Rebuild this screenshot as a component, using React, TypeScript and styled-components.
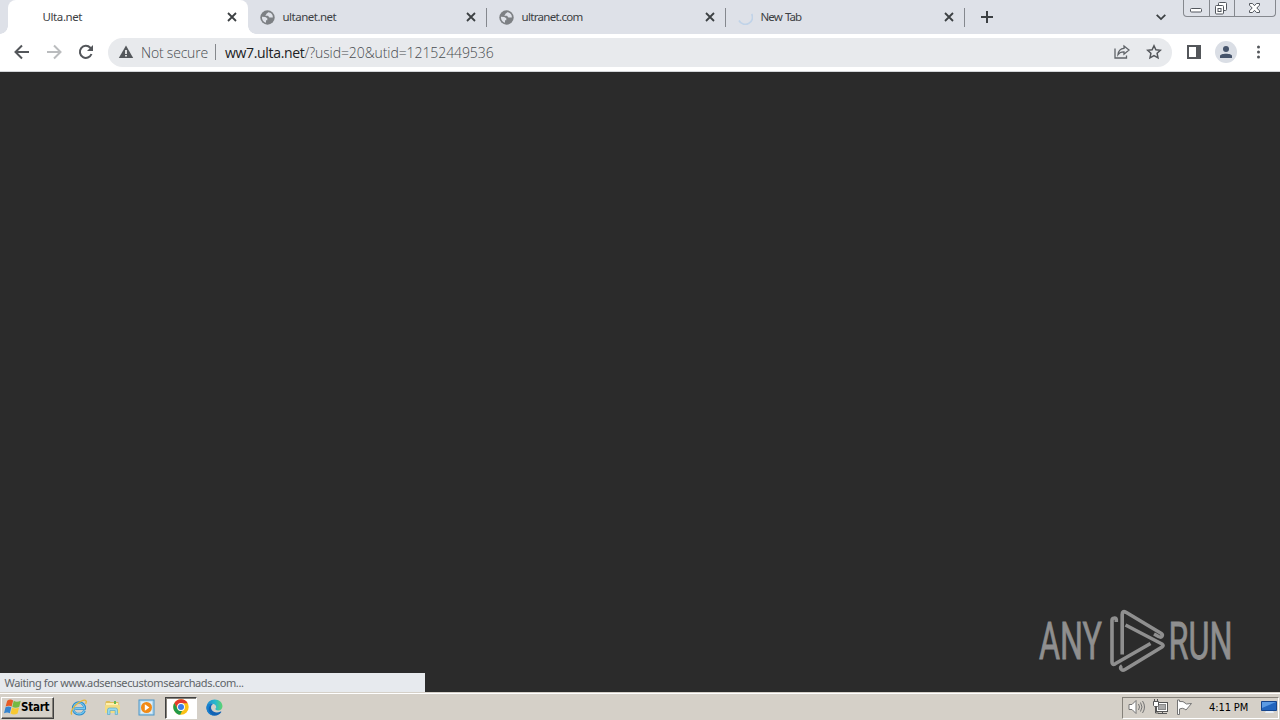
import React from "react"
import styled, { createGlobalStyle, css } from "styled-components"


const GlobalStyle = createGlobalStyle`
  * {
    box-sizing: border-box;
  }

  body {
    margin: 0;
    overflow: hidden;
    font-family: "DejaVu Sans Condensed", "DejaVu Sans", sans-serif;
  }

  svg {
    display: block;
    flex: none;
  }
`

const Desktop = styled.div`
  display: flex;
  flex-direction: column;

  width: 1280px;
  height: 720px;

  overflow: hidden;
`

const TabStrip = styled.div`
  display: flex;
  position: relative;

  height: 34px;
  padding-left: 8px;

  background: #dee1e8;
`

const TabItem = styled.div<{ $active?: boolean }>`
  display: flex;
  align-items: center;
  position: relative;

  width: ${ props => props.$active ? "240px" : "239px" };
  height: 34px;
  padding: 0 11px;

  ${ props => props.$active ? css`
    background: #fff;
    border-radius: 8px 8px 0 0;

    &::before,
    &::after {
      content: "";
      position: absolute;
      bottom: 0;
      width: 8px;
      height: 8px;
    }

    &::before {
      left: -8px;
      background: radial-gradient(circle at 0 0, transparent 7.5px, #fff 8px);
    }

    &::after {
      right: -8px;
      background: radial-gradient(circle at 100% 0, transparent 7.5px, #fff 8px);
    }
  ` : css`
    &::after {
      content: "";
      position: absolute;
      top: 8px;
      right: 0;
      width: 1px;
      height: 19px;
      background: #85888e;
    }
  ` }
`

const Favicon = styled.span`
  display: flex;
  justify-content: center;

  width: 16px;
  margin-right: 7.5px;
`

const TabTitle = styled.span<{ $spacing: number }>`
  flex: 1;

  font-family: "Noto Sans", sans-serif;
  font-size: 11.5px;
  line-height: 34px;
  letter-spacing: ${ props => props.$spacing }px;
  word-spacing: 1px;
  white-space: nowrap;

  color: #3c4043;
`

const CloseSlot = styled.span`
  width: 10px;
`

const NewTab = styled.span`
  padding: 11px 0 0 16px;
`

const TabSearch = styled.span`
  margin-left: auto;
  padding: 14px 17px 0 0;
`

const WindowControls = styled.div`
  display: flex;

  width: 93px;
  height: 17px;
  margin-right: 4px;

  border: 1px solid #85888e;
  border-top: none;
  border-radius: 0 0 4px 4px;
`

const WindowButton = styled.span<{ $width: number }>`
  display: flex;
  justify-content: center;

  width: ${ props => props.$width }px;
  height: 16px;

  & + & {
    border-left: 1px solid #85888e;
  }
`

const Toolbar = styled.div`
  display: flex;
  align-items: center;

  height: 38px;
  padding: 0 13px 1px 14px;

  background: #fff;
  border-bottom: 1px solid #d3d5d8;
`

const NavButtons = styled.div`
  display: flex;
  flex: none;
  gap: 16px;

  width: 94px;
`

const AddressBar = styled.div`
  display: flex;
  flex: none;
  align-items: center;

  width: 1064px;
  height: 29px;
  padding: 0 10px;

  font-family: "Open Sans", "Noto Sans", sans-serif;
  font-size: 14px;
  font-weight: 300;
  white-space: nowrap;

  color: #484c50;
  background: #e8eaed;
  border-radius: 15px;
`

const Security = styled.span`
  width: 67px;
  margin-left: 7px;

  letter-spacing: -0.2px;
`

const Divider = styled.span`
  width: 1px;
  height: 16px;
  margin: 0 9px 0 7px;

  background: #85888c;
`

const Url = styled.span`
  flex: 1;

  letter-spacing: -0.08px;
`

const Host = styled.span`
  font-weight: 400;
  letter-spacing: -0.33px;

  color: #202124;
`

const AddressActions = styled.span`
  display: flex;
  align-items: center;
  gap: 16px;
`

const ToolbarActions = styled.div`
  display: flex;
  align-items: center;

  padding-left: 14px;
`

const Avatar = styled.span`
  display: flex;
  align-items: center;
  justify-content: center;

  width: 22px;
  height: 22px;
  margin: 0 14px 0 13px;

  background: #dadee5;
  border-radius: 50%;
`

const Page = styled.main`
  display: flex;
  justify-content: space-between;
  align-items: flex-end;

  height: 620px;

  background: #2b2b2b;
`

const StatusBubble = styled.div`
  width: 425px;
  height: 19px;
  padding-left: 4.5px;

  font-family: "Noto Sans", sans-serif;
  font-size: 11px;
  line-height: 20px;
  letter-spacing: -0.37px;

  color: #606468;
  background: #e7eaee;
`

const Watermark = styled.div`
  margin: 0 40px 17px 0;
`

const Taskbar = styled.footer`
  display: flex;
  align-items: center;

  height: 28px;
  padding: 2px 0 0 1px;

  background: #d5d0c8;
  border-top: 1px solid #d5d0c8;
  box-shadow: inset 0 1px #fff;
`

const StartButton = styled.div`
  display: flex;
  align-items: center;

  width: 53px;
  height: 22px;
  padding: 0 0 2px 2px;

  font-family: "DejaVu Sans Condensed", "DejaVu Sans", sans-serif;
  font-size: 11.5px;
  font-weight: bold;
  letter-spacing: -0.25px;

  color: #000;
  border: 1px solid;
  border-color: #fff #404040 #404040 #fff;
  box-shadow: inset -1px -1px #85817a;
`

const QuickLaunch = styled.div`
  display: flex;
  align-items: center;

  margin-left: 8px;
`

const LaunchItem = styled.span<{ $pressed?: boolean }>`
  display: flex;
  align-items: center;
  justify-content: center;

  width: 32px;
  height: 22px;
  margin: 0 1px;
  padding: 0 1px 1px 0;

  ${ props => props.$pressed && css`
    background: #fff;
    border: 1px solid;
    border-color: #404040 #fff #fff #404040;
    box-shadow: inset 1px 1px #85817a;
  ` }
`

const Tray = styled.div`
  display: flex;
  align-items: center;

  width: 157px;
  height: 22px;
  margin: 0 1px 0 auto;
  padding: 0 0 1px 5px;

  border: 1px solid;
  border-color: #85817a #fff #fff #85817a;
`

const TrayIcons = styled.span`
  display: flex;
  gap: 7px;
`

const Clock = styled.span`
  width: 42px;
  margin: 0 10px 0 17px;

  font-size: 11px;
  letter-spacing: -0.1px;
  white-space: nowrap;

  color: #000;
`


const CloseIcon = () => (
  <svg width="10" height="10" viewBox="0 0 10 10" stroke="#3c4043" strokeWidth="1.8">
    <path d="M1 1l8 8M9 1L1 9" />
  </svg>
)

const GlobeIcon = () => (
  <svg width="15" height="15" viewBox="0 0 15 15">
    <circle cx="7.5" cy="7.5" r="7.2" fill="#7d8084" />
    <path d="M2 6.8l3.3.2 2 1.3v2H6v2.5C3.3 12.1 1.6 9.6 2 6.8zM8 2.2c-.2 1.3-1.7.9-1.8 2.3l-1 1.3H8l1.4 1.7h3.4C13.2 4.8 11.3 2.5 8 2.2z" fill="#dee1e8" />
  </svg>
)

const SpinnerIcon = () => (
  <svg width="16" height="16" viewBox="0 0 16 16" fill="none">
    <path d="M14.7 5A7 7 0 1 1 2 11.5" stroke="#c0d3e8" strokeWidth="1.7" />
  </svg>
)

const WindowIcons = () => (
  <WindowControls>
    <WindowButton $width={25}>
      <svg width="14" height="16" viewBox="0 0 14 16">
        <rect x="0.5" y="8.5" width="11" height="3.5" rx="1" fill="#fff" stroke="#53575e" />
      </svg>
    </WindowButton>
    <WindowButton $width={25}>
      <svg width="14" height="16" viewBox="0 0 14 16" fill="#fff" stroke="#53575e">
        <rect x="3.5" y="2.5" width="8" height="8" rx="1" />
        <rect x="0.5" y="5.500" width="8" height="8.500" rx="1" />
        <rect x="3" y="8.500" width="3" height="3" />
      </svg>
    </WindowButton>
    <WindowButton $width={41}>
      <svg width="13" height="16" viewBox="0 0 13 16">
        <path d="M.5 3.500h3l2 2.200 2-2.200h3v1.700L7.800 8l2.700 2.800v1.700h-3l-2-2.200-2 2.200h-3v-1.700L3.200 8 .5 5.200z" fill="#fff" stroke="#53575e" />
      </svg>
    </WindowButton>
  </WindowControls>
)

const ChromeIcon = () => (
  <svg width="16" height="16" viewBox="0 0 16 16">
    <circle cx="8" cy="8" r="7.7" fill="#fbc116" />
    <path d="M1.3 4.1A7.7 7.7 0 0 1 14.7 4.2H8a3.9 3.9 0 0 0-3.4 5.7z" fill="#e33b2e" />
    <path d="M1.3 4.1l3.3 5.8a3.9 3.9 0 0 0 4.5 1.8l-1.9 4A7.7 7.7 0 0 1 1.3 4.1z" fill="#229a49" />
    <circle cx="8" cy="8" r="3.9" fill="#fff" />
    <circle cx="8" cy="8" r="3" fill="#3b7de8" />
  </svg>
)

const EdgeIcon = () => (
  <svg width="17" height="17" viewBox="0 0 17 17">
    <defs>
      <linearGradient id="edgeTop">
        <stop offset="0" stopColor="#2389d2" />
        <stop offset="0.55" stopColor="#28b8cd" />
        <stop offset="1" stopColor="#60d46d" />
      </linearGradient>
    </defs>
    <path d="M.5 8C.8 3.5 4.3.5 8.6.5c4.8 0 7.9 3.2 7.9 6.7 0 2.8-2.1 4.2-4.4 4.2-1.8 0-2.7-.6-2.7-1.3 0-.6.8-.8.8-2C10.2 5.800 8 4.500 5.500 4.800 3 5 1.200 6.500.5 8z" fill="url(#edgeTop)" />
    <path d="M.5 8C1.300 5.600 4 4.300 6.800 5c-2 1.300-2.300 4-1 6 1.600 2.500 5 3.200 8.900 1.600.6-.2.800.1.500.6-1.500 2.200-3.900 3.500-6.600 3.500C4 16.700.2 13 .5 8z" fill="#1263b4" />
    <path d="M6.800 5c-3.500.8-4.900 4.400-3.600 7.500 1 2.300 3 3.800 5.400 4.200C4 16.700.2 13 .5 8 1.300 5.600 4 4.300 6.800 5z" fill="#1780cf" />
  </svg>
)

const ExplorerIcon = () => (
  <svg width="17" height="17" viewBox="0 0 17 17" fill="none">
    <path d="M14.500 11.500C13.500 14 11.500 15.200 9 15.200c-3.400 0-5.800-2.500-5.800-5.800S5.600 3.500 9 3.500s5.800 2.600 5.700 6H5.200" stroke="#2c8ccc" strokeWidth="2.700" />
    <path d="M14.300 11.500C13.300 14 11.300 14.900 9 14.900c-3.200 0-5.500-2.300-5.500-5.500S5.800 3.900 9 3.900s5.400 2.300 5.400 5.400H5.200" stroke="#76caf1" strokeWidth="1.200" />
    <path d="M1.800 15.500C-.2 13 3.500 7.200 8.500 3.700c3.200-2.300 6.600-3.200 7.500-1.800.5.800.2 1.900-.4 3" stroke="#e8b737" strokeWidth="1.300" />
  </svg>
)

const FolderIcon = () => (
  <svg width="17" height="17" viewBox="0 0 17 17">
    <path d="M1.500 3l1-1h3l1 1h8v9h-13z" fill="#dfbd58" />
    <path d="M2 4h12v4H2z" fill="#fff0ac" />
    <path d="M10 2h2v3h-2z" fill="#68b84f" />
    <path d="M1 6h15v8H1z" fill="#f3dc82" />
    <path d="M3.500 15.500V11q0-2 2-2h6q2 0 2 2v4.500h-2.300V11.500H6v4z" fill="#98d9ed" stroke="#5babc8" strokeWidth="0.7" />
  </svg>
)

const MediaIcon = () => (
  <svg width="17" height="17" viewBox="0 0 17 17">
    <rect x="1" y="1" width="15" height="15" fill="#b5d9ee" stroke="#4c95c7" />
    <rect x="3" y="2.5" width="11" height="12" fill="#deeffa" />
    <circle cx="8.5" cy="8.5" r="5.5" fill="#f18a16" />
    <path d="M6.800 5.300v6.400l4.600-3.200z" fill="#fff" />
  </svg>
)

const WindowsIcon = () => (
  <svg width="17" height="18" viewBox="0 0 16 17">
    <path d="M3 2.500C5 1 7 1.300 8.600 2.300L7.200 8C5.500 7 4 7 1.500 8z" fill="#e65b25" />
    <path d="M9.200 2.700c2 1.200 4 1.100 6.600-.1l-1.400 5.600c-2.300 1.200-4.500 1.200-6.600.1z" fill="#75b943" />
    <path d="M1.400 8.700c2-1 3.800-1 5.500 0l-1.400 5.700c-1.800-1.100-3.400-1-5.500 0z" fill="#3584cf" />
    <path d="M7.600 9c2 1.100 4.200 1.100 6.600 0l-1.400 5.600c-2.300 1.200-4.500 1.200-6.600.1z" fill="#f8c831" />
  </svg>
)

const AnyRunLogo = () => (
  <svg width="204" height="70" viewBox="0 0 204 70">
    <g fill="#8f8f8f" stroke="#8f8f8f" strokeWidth="0.8" fontFamily="Roboto, sans-serif" fontSize="51">
      <text x="3" y="54" textLength="63" lengthAdjust="spacingAndGlyphs">ANY</text>
      <text x="132.5" y="54" textLength="64" lengthAdjust="spacingAndGlyphs">RUN</text>
    </g>
    <g fill="none" stroke="#8f8f8f" strokeWidth="3.6" strokeLinejoin="round">
      <path d="M80.300 17v-2.500q-.3-1.700-2-1.500-2.300.2-2.300 2.500V57q0 3.500 3.200 1.800L114.500 38.500" />
      <path d="M86.200 49.500V9.500q0-4.300 3.800-2.200L125 28.200q2 1.500 1 3-1 1.500-3.500.3L118 29" />
      <path d="M89.500 20L126 39q2.200 1.500 0 3L89 64.500q-2.500 1.500-4-.5-1.200-2 1-3.300" />
    </g>
  </svg>
)


const App: React.FC = () => {

  return (
    <Desktop>
      <GlobalStyle />

      <TabStrip>
        <TabItem $active>
          <Favicon />
          <TabTitle $spacing={-0.4}>Ulta.net</TabTitle>
          <CloseSlot><CloseIcon /></CloseSlot>
        </TabItem>
        <TabItem>
          <Favicon><GlobeIcon /></Favicon>
          <TabTitle $spacing={-0.5}>ultanet.net</TabTitle>
          <CloseSlot><CloseIcon /></CloseSlot>
        </TabItem>
        <TabItem>
          <Favicon><GlobeIcon /></Favicon>
          <TabTitle $spacing={-0.68}>ultranet.com</TabTitle>
          <CloseSlot><CloseIcon /></CloseSlot>
        </TabItem>
        <TabItem>
          <Favicon><SpinnerIcon /></Favicon>
          <TabTitle $spacing={-0.9}>New Tab</TabTitle>
          <CloseSlot><CloseIcon /></CloseSlot>
        </TabItem>
        <NewTab>
          <svg width="12" height="12" viewBox="0 0 12 12" stroke="#3c4043" strokeWidth="2">
            <path d="M6 0v12M0 6h12" />
          </svg>
        </NewTab>
        <TabSearch>
          <svg width="10" height="7" viewBox="0 0 10 7" fill="none" stroke="#3c4043" strokeWidth="1.8">
            <path d="M.7.800L5 5.100 9.300.8" />
          </svg>
        </TabSearch>
        <WindowIcons />
      </TabStrip>

      <Toolbar>
        <NavButtons>
          <svg width="16" height="16" viewBox="0 0 16 16" fill="none" stroke="#53565a" strokeWidth="2">
            <path d="M15 8H2.500M8 1.500L1.500 8 8 14.500" />
          </svg>
          <svg width="16" height="16" viewBox="0 0 16 16" fill="none" stroke="#babcbe" strokeWidth="2">
            <path d="M1 8h12.500M8 1.500L14.500 8 8 14.500" />
          </svg>
          <svg width="16" height="16" viewBox="0 0 16 16" fill="none" stroke="#53565a" strokeWidth="2">
            <path d="M13.500 10A6 6 0 1 1 12.300 3.800L14 5.500" />
            <path d="M15 1v6H9z" fill="#53565a" stroke="none" />
          </svg>
        </NavButtons>
        <AddressBar>
          <svg width="16" height="16" viewBox="0 0 16 16">
            <path d="M8 1.500L15.200 14H.8z" fill="#54585c" />
            <path d="M7.200 6h1.600v4H7.200zM7.200 11h1.600v1.600H7.200z" fill="#fff" />
          </svg>
          <Security>Not secure</Security>
          <Divider />
          <Url><Host>ww7.ulta.net</Host>/?usid=20&amp;utid=12152449536</Url>
          <AddressActions>
            <svg width="16" height="16" viewBox="0 0 16 16" fill="none" stroke="#5f6368" strokeWidth="1.3">
              <path d="M1 4.500V14h11.500v-2.500" />
              <path d="M10 2l5 4-5 4.200V7.800C7.200 7.700 5.300 8.700 4 10.500 4.400 7 6.500 4.600 10 4.300z" />
            </svg>
            <svg width="16" height="16" viewBox="0 0 16 16" fill="none" stroke="#53565a" strokeWidth="1.5">
              <path d="M8 1.800l1.900 4 4.500.5-3.300 3 .9 4.500L8 11.600l-4 2.200.9-4.500-3.300-3 4.500-.5z" />
            </svg>
          </AddressActions>
        </AddressBar>
        <ToolbarActions>
          <svg width="16" height="16" viewBox="0 0 16 16">
            <path d="M1 1h14v14H1zM3 3v10h7V3z" fill="#53565a" fillRule="evenodd" />
          </svg>
          <Avatar>
            <svg width="14" height="14" viewBox="0 0 14 14" fill="#46546b">
              <circle cx="7" cy="4" r="3" />
              <path d="M1 13v-2c0-3 12-3 12 0v2z" />
            </svg>
          </Avatar>
          <svg width="16" height="16" viewBox="0 0 16 16" fill="#53565a">
            <circle cx="7.5" cy="3" r="1.5" />
            <circle cx="7.5" cy="8" r="1.5" />
            <circle cx="7.5" cy="13" r="1.5" />
          </svg>
        </ToolbarActions>
      </Toolbar>

      <Page>
        <StatusBubble>Waiting for www.adsensecustomsearchads.com...</StatusBubble>
        <Watermark><AnyRunLogo /></Watermark>
      </Page>

      <Taskbar>
        <StartButton>
          <WindowsIcon />
          Start
        </StartButton>
        <QuickLaunch>
          <LaunchItem><ExplorerIcon /></LaunchItem>
          <LaunchItem><FolderIcon /></LaunchItem>
          <LaunchItem><MediaIcon /></LaunchItem>
          <LaunchItem $pressed><ChromeIcon /></LaunchItem>
          <LaunchItem><EdgeIcon /></LaunchItem>
        </QuickLaunch>
        <Tray>
          <TrayIcons>
            <svg width="17" height="16" viewBox="0 0 17 16" fill="none" stroke="#747474">
              <path d="M1 5.500h3l4-4v13l-4-4H1z" fill="#fff" />
              <path d="M10.500 5q2 3 0 6M12.500 3.500q3 4.500 0 9M14.500 2q4 6 0 12" />
            </svg>
            <svg width="17" height="16" viewBox="0 0 17 16" fill="none" stroke="#555">
              <rect x="4.5" y="3.5" width="11" height="9" fill="#fff" />
              <rect x="6.5" y="5.5" width="7" height="5" fill="#a9a9a9" stroke="#888" />
              <path d="M6 14.500h9M10.500 12v2M3.500 8v6h3" />
              <path d="M1.500 2.500h5v4l-1 1h-3l-1-1zM2.500 0v2M5.500 0v2" fill="#fff" />
            </svg>
            <svg width="16" height="16" viewBox="0 0 16 16" fill="#fff" stroke="#747474">
              <path d="M1.500 1v14.500h2V10q3-1.500 5 0l1.500 1 5.500-6.500-5 .5Q7 1.500 3.500 2.500V1z" />
            </svg>
          </TrayIcons>
          <Clock>4:11 PM</Clock>
          <svg width="16" height="16" viewBox="0 0 16 16">
            <path d="M.5 2.500h15v9H.5z" fill="#2265bd" stroke="#15458d" />
            <path d="M1 3h14L1 9z" fill="#5b9be4" />
            <path d="M5 12h7l1 2H4z" fill="#e6edf5" />
          </svg>
        </Tray>
      </Taskbar>
    </Desktop>
  )
}

export default App
